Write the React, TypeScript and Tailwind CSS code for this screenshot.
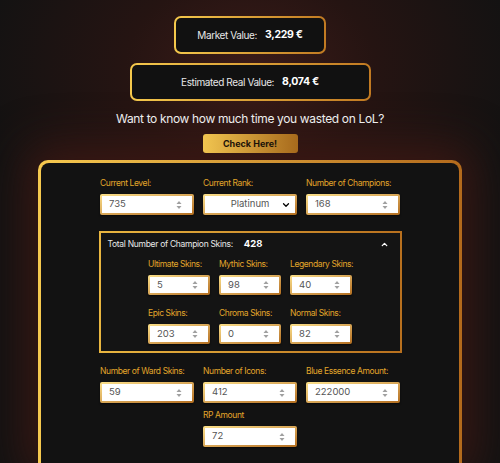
import { ChevronDown, ChevronUp } from "lucide-react";

const font = { fontFamily: "Inter, 'Open Sans', sans-serif" };

function Spinner() {
  return (
    <svg width="6" height="10" viewBox="0 0 6 10" className="shrink-0">
      <path d="M3 1 L5.5 4 H0.5 Z" fill="#a0a0a0" />
      <path d="M3 9 L5.5 6 H0.5 Z" fill="#a0a0a0" />
    </svg>
  );
}

function Field({ label, value, wide = true }: { label: string; value: string; wide?: boolean }) {
  return (
    <div className="flex flex-col">
      <span className="mb-[5px] whitespace-nowrap text-[8.5px] leading-[12px] tracking-[-0.4px] text-[#e2a62a]">
        {label}
      </span>
      <div
        className={`${wide ? "h-[21px]" : "h-[20px]"} rounded-[2px] bg-gradient-to-br from-[#fbe08a] to-[#b46f1f] p-[2px] shadow-[0_1px_2px_rgba(0,0,0,0.6)]`}
      >
        <div className="flex h-full items-center justify-between bg-white pl-[7px] pr-[10px]">
          <span className="text-[9.5px] text-[#555]">{value}</span>
          <Spinner />
        </div>
      </div>
    </div>
  );
}

export default function App() {
  return (
    <div
      style={font}
      className="h-[463px] overflow-hidden bg-[#121212] bg-[radial-gradient(ellipse_280px_210px_at_50%_70px,#3c1b18_0%,#251412_45%,#121212_100%)]"
    >
      <div className="flex flex-col items-center pt-[16px]">
        <div className="rounded-[7px] bg-gradient-to-r from-[#f4c84c] to-[#c17a22] p-[2px]">
          <div className="flex h-[34px] w-[148px] items-center justify-center gap-[8px] rounded-[5px] bg-[#111]">
            <span className="text-[10px] tracking-[-0.4px] text-[#e8e8e8]">Market Value:</span>
            <span className="text-[10.5px] font-bold tracking-[-0.3px] text-white">3,229 €</span>
          </div>
        </div>
        <div className="mt-[9px] rounded-[7px] bg-gradient-to-r from-[#f4c84c] to-[#c17a22] p-[2px]">
          <div className="flex h-[34px] w-[237px] items-center justify-center gap-[8px] rounded-[5px] bg-[#111]">
            <span className="text-[10px] tracking-[-0.4px] text-[#e8e8e8]">Estimated Real Value:</span>
            <span className="text-[10.5px] font-bold tracking-[-0.3px] text-white">8,074 €</span>
          </div>
        </div>
        <p className="mt-[9px] text-[12px] leading-[18px] tracking-[-0.35px] text-[#ededed]">
          Want to know how much time you wasted on LoL?
        </p>
        <button className="mt-[6px] h-[19px] w-[95px] rounded-[3px] bg-gradient-to-r from-[#f1c550] to-[#a76a1c] text-[9px] font-bold text-[#1a1208]">
          Check Here!
        </button>
      </div>

      <div className="mx-[38px] mt-[7px] rounded-t-[10px] bg-gradient-to-r from-[#f6c94f] to-[#b36a1c] px-[3px] pt-[3px] shadow-[0_0_45px_14px_rgba(70,25,20,0.75)]">
        <div className="flex h-[300px] flex-col items-center rounded-t-[8px] bg-[#121212] pt-[14px]">
          <div className="grid w-[300px] grid-cols-3 gap-x-[9px]">
            <Field label="Current Level:" value="735" />
            <div className="flex flex-col">
              <span className="mb-[5px] whitespace-nowrap text-[8.5px] leading-[12px] tracking-[-0.4px] text-[#e2a62a]">
                Current Rank:
              </span>
              <div className="h-[21px] rounded-[2px] bg-gradient-to-br from-[#fbe08a] to-[#b46f1f] p-[2px] shadow-[0_1px_2px_rgba(0,0,0,0.6)]">
                <div className="relative flex h-full items-center justify-center bg-white">
                  <span className="text-[9.5px] text-[#555]">Platinum</span>
                  <ChevronDown className="absolute right-[4px] h-[10px] w-[10px] text-black" strokeWidth={3} />
                </div>
              </div>
            </div>
            <Field label="Number of Champions:" value="168" />
          </div>

          <div className="mt-[16px] w-[303px] bg-gradient-to-r from-[#e9b640] to-[#b8701e] p-[2px]">
            <div className="bg-[#141414] pb-[7px]">
              <div className="flex h-[20px] items-center justify-between pl-[7px] pr-[11px] pt-[2px]">
                <div className="flex items-center gap-[11px]">
                  <span className="text-[8.5px] tracking-[-0.3px] text-[#e8e8e8]">Total Number of Champion Skins:</span>
                  <span className="text-[9.5px] font-bold text-white">428</span>
                </div>
                <ChevronUp className="h-[9px] w-[9px] text-white" strokeWidth={3.5} />
              </div>
              <div className="mx-auto mt-[5px] grid w-[204px] grid-cols-3 gap-x-[9px] gap-y-[12px]">
                <Field label="Ultimate Skins:" value="5" wide={false} />
                <Field label="Mythic Skins:" value="98" wide={false} />
                <Field label="Legendary Skins:" value="40" wide={false} />
                <Field label="Epic Skins:" value="203" wide={false} />
                <Field label="Chroma Skins:" value="0" wide={false} />
                <Field label="Normal Skins:" value="82" wide={false} />
              </div>
            </div>
          </div>

          <div className="mt-[12px] grid w-[300px] grid-cols-3 gap-x-[9px] gap-y-[6px]">
            <Field label="Number of Ward Skins:" value="59" />
            <Field label="Number of Icons:" value="412" />
            <Field label="Blue Essence Amount:" value="222000" />
            <div />
            <Field label="RP Amount" value="72" />
          </div>
        </div>
      </div>
    </div>
  );
}
